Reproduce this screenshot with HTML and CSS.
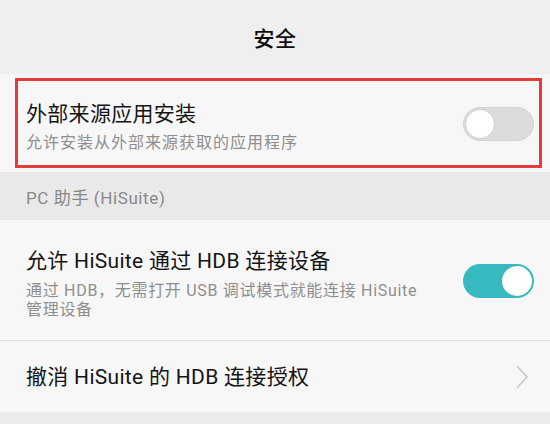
FILE: index.html
```html
<!DOCTYPE html>
<html lang="zh-CN">
<head>
<meta charset="utf-8">
<title>安全</title>
<link rel="stylesheet" href="styles.css">
</head>
<body>
<div class="screen">
  <header class="topbar">安全</header>

  <div class="row row-first highlight">
    <div class="text">
      <div class="title">外部来源应用安装</div>
      <div class="sub">允许安装从外部来源获取的应用程序</div>
    </div>
    <div class="switch off"><span class="knob"></span></div>
  </div>

  <div class="section">PC 助手 (HiSuite)</div>

  <div class="row row-second">
    <div class="text narrow">
      <div class="title">允许 HiSuite 通过 HDB 连接设备</div>
      <div class="sub">通过 HDB，无需打开 USB 调试模式就能连接 HiSuite 管理设备</div>
    </div>
    <div class="switch on"><span class="knob"></span></div>
  </div>

  <div class="row row-third">
    <div class="title">撤消 HiSuite 的 HDB 连接授权</div>
    <svg class="chev" width="12" height="24" viewBox="0 0 12 24"><polyline points="1,1 11,12 1,23" fill="none" stroke="#c4c4c4" stroke-width="1.4"/></svg>
  </div>
</div>
</body>
</html>
```
FILE: styles.css
```css
html, body {
  margin: 0;
  padding: 0;
}
body {
  width: 550px;
  height: 424px;
  overflow: hidden;
  background: #ebebeb;
  font-family: Roboto, "Noto Sans CJK SC", sans-serif;
  color: #1a1a1a;
}
.screen {
  display: flex;
  flex-direction: column;
}
.topbar {
  height: 74px;
  background: #efefef;
  display: flex;
  align-items: center;
  justify-content: center;
  font-size: 21px;
  font-weight: 500;
  letter-spacing: 0.5px;
  color: #0d0d0d;
}
.row {
  background: #f7f7f7;
  display: flex;
  align-items: flex-start;
  padding: 0 16px 0 26px;
  box-sizing: border-box;
}
.text {
  flex: 1;
  display: flex;
  flex-direction: column;
}
.title {
  font-size: 21px;
  line-height: 30px;
  letter-spacing: 0.3px;
  color: #141414;
}
.sub {
  font-size: 16px;
  line-height: 28px;
  letter-spacing: 1px;
  color: #8e8e8e;
}
.row-first {
  height: 98px;
  padding-top: 25px;
  position: relative;
}
.highlight::after {
  content: "";
  position: absolute;
  left: 15px;
  right: 8px;
  top: 4px;
  bottom: 4px;
  border: 3px solid #e53b3b;
  pointer-events: none;
}
.section {
  height: 48px;
  background: #e9e9e9;
  padding-left: 26px;
  display: flex;
  align-items: center;
  font-size: 17px;
  letter-spacing: 0.6px;
  color: #888;
}
.row-second {
  height: 121px;
  padding-top: 26px;
  border-bottom: 1px solid #dedede;
}
.row-second .sub {
  line-height: 19px;
  margin-top: 5px;
  letter-spacing: 0.7px;
}
.narrow {
  max-width: 410px;
}
.row-third {
  height: 71px;
  align-items: center;
  justify-content: space-between;
  padding-right: 22px;
}
.switch {
  flex: none;
  width: 71px;
  height: 34px;
  border-radius: 17px;
  box-sizing: border-box;
  display: flex;
  align-items: center;
  padding: 0 2px;
  margin-left: auto;
}
.switch.off {
  background: #dcdcdc;
  border: 1px solid #d2d2d2;
  justify-content: flex-start;
  margin-top: 8px;
}
.switch.on {
  background: #37babf;
  justify-content: flex-end;
  margin-top: 18px;
}
.knob {
  width: 30px;
  height: 30px;
  border-radius: 50%;
  background: #fff;
  box-sizing: border-box;
}
.switch.off .knob {
  border: 1px solid #d0d0d0;
  margin-left: -1px;
}
.chev {
  display: block;
}
```
